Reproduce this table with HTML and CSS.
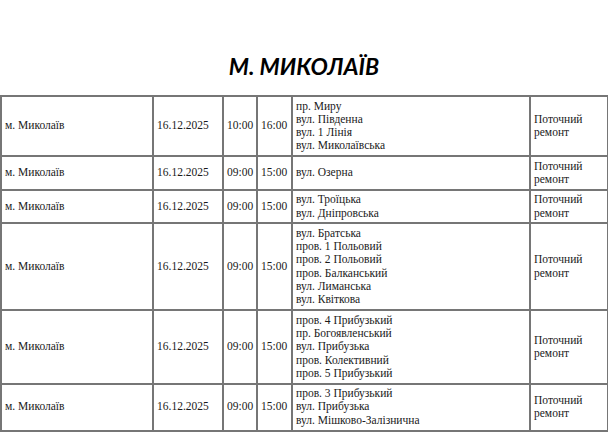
FILE: index.html
```html
<!DOCTYPE html>
<html lang="uk">
<head>
<meta charset="utf-8">
<title>м. Миколаїв</title>
<link rel="stylesheet" href="styles.css">
</head>
<body>
<h1 class="title">М. МИКОЛАЇВ</h1>
<table class="grid">
  <colgroup>
    <col class="c-city"><col class="c-date"><col class="c-t1"><col class="c-t2"><col class="c-addr"><col class="c-type">
  </colgroup>
  <tbody>
    <tr>
      <td>м. Миколаїв</td><td>16.12.2025</td><td>10:00</td><td>16:00</td>
      <td>пр. Миру<br>вул. Південна<br>вул. 1 Лінія<br>вул. Миколаївська</td>
      <td>Поточний<br>ремонт</td>
    </tr>
    <tr>
      <td>м. Миколаїв</td><td>16.12.2025</td><td>09:00</td><td>15:00</td>
      <td>вул. Озерна</td>
      <td>Поточний<br>ремонт</td>
    </tr>
    <tr>
      <td>м. Миколаїв</td><td>16.12.2025</td><td>09:00</td><td>15:00</td>
      <td>вул. Троїцька<br>вул. Дніпровська</td>
      <td>Поточний<br>ремонт</td>
    </tr>
    <tr>
      <td>м. Миколаїв</td><td>16.12.2025</td><td>09:00</td><td>15:00</td>
      <td>вул. Братська<br>пров. 1 Польовий<br>пров. 2 Польовий<br>пров. Балканський<br>вул. Лиманська<br>вул. Квіткова</td>
      <td>Поточний<br>ремонт</td>
    </tr>
    <tr>
      <td>м. Миколаїв</td><td>16.12.2025</td><td>09:00</td><td>15:00</td>
      <td>пров. 4 Прибузький<br>пр. Богоявленський<br>вул. Прибузька<br>пров. Колективний<br>пров. 5 Прибузький</td>
      <td>Поточний<br>ремонт</td>
    </tr>
    <tr>
      <td>м. Миколаїв</td><td>16.12.2025</td><td>09:00</td><td>15:00</td>
      <td>пров. 3 Прибузький<br>вул. Прибузька<br>вул. Мішково-Залізнична</td>
      <td>Поточний<br>ремонт</td>
    </tr>
  </tbody>
</table>
</body>
</html>
```
FILE: styles.css
```css
html, body {
  margin: 0;
  padding: 0;
  background: #ffffff;
}

.title {
  margin: 0 0 16px 0;
  padding-top: 53px;
  height: 26px;
  line-height: 26px;
  text-align: center;
  font-family: Lato, "Liberation Sans", sans-serif;
  font-style: italic;
  font-weight: 700;
  font-size: 23px;
  color: #000;
}

.grid {
  width: 607px;
  table-layout: fixed;
  border-collapse: collapse;
  font-family: "Liberation Serif", Tinos, "Times New Roman", Times, serif;
  font-size: 11.5px;
  line-height: 13.3px;
  color: #1a1a1a;
}

.grid td {
  border: 2px solid #767676;
  padding: 2.5px 3px;
  vertical-align: middle;
  white-space: nowrap;
}

.c-city { width: 152px; }
.c-date { width: 70px; }
.c-t1 { width: 34px; }
.c-t2 { width: 35px; }
.c-addr { width: 238px; }
.c-type { width: 78px; }
```
